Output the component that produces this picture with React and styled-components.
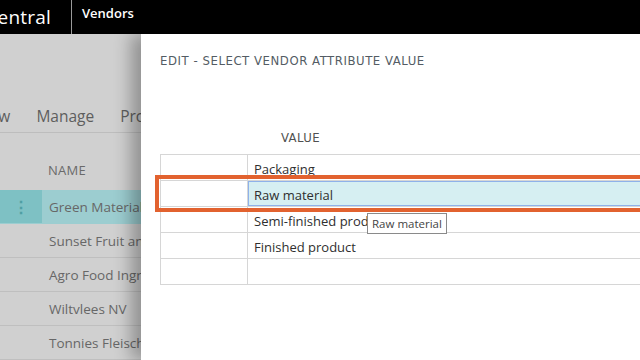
import styled, { createGlobalStyle } from "styled-components";

const GlobalStyle = createGlobalStyle`
  html, body {
    margin: 0;
    padding: 0;
    width: 640px;
    height: 360px;
    overflow: hidden;
    background: #000;
  }
  * {
    box-sizing: border-box;
  }
`;

const Screen = styled.div`
  display: flex;
  flex-direction: column;
  width: 640px;
  height: 360px;
  font-family: "Open Sans", "Noto Sans", sans-serif;
`;

const TopBar = styled.header`
  display: flex;
  align-items: stretch;
  height: 34px;
  background: #000;
  color: #fff;
  flex-shrink: 0;
`;

const Brand = styled.div`
  width: 72px;
  display: flex;
  justify-content: flex-end;
  align-items: center;
  overflow: hidden;
  white-space: nowrap;
  font-size: 19px;
  padding-right: 20px;
  border-right: 1px solid #9a9a9a;
  letter-spacing: 0.2px;
`;

const PageName = styled.div`
  padding: 4px 0 0 10px;
  font-size: 13px;
  font-weight: 600;
`;

const Workspace = styled.div`
  flex: 1;
  display: flex;
  min-height: 0;
`;

const Behind = styled.section`
  width: 141px;
  flex-shrink: 0;
  background: #d0d0d0;
  overflow: hidden;
  display: flex;
  flex-direction: column;
  padding-top: 71px;
`;

const ActionBar = styled.nav`
  display: flex;
  gap: 26px;
  margin-left: -22px;
  height: 28px;
  width: 200px;
  border-bottom: 1px solid #bdbdbd;
  white-space: nowrap;
  font-size: 15.5px;
  line-height: 22px;
  color: #5e5e5e;
`;

const ListHeader = styled.div`
  padding: 28px 0 0 48px;
  height: 57px;
  font-size: 13px;
  color: #6a6a6a;
  letter-spacing: 0.3px;
`;

const ListRow = styled.div`
  display: flex;
  height: 34px;
  border-bottom: 1px solid ${(p) => (p.$selected ? "transparent" : "#bfbfbf")};
  background: ${(p) => (p.$selected ? "#9ccdd0" : "transparent")};
  white-space: nowrap;
  font-size: 13.5px;
  color: #676767;
`;

const RowHandle = styled.div`
  width: 42px;
  flex-shrink: 0;
  display: flex;
  align-items: center;
  justify-content: center;
  background: ${(p) => (p.$selected ? "#7ec1c4" : "transparent")};
  color: #4f9fa3;
  font-size: 16px;
  font-weight: 700;
`;

const RowName = styled.div`
  padding-left: 7px;
  display: flex;
  align-items: center;
`;

const Dialog = styled.section`
  position: relative;
  flex: 1;
  background: #fff;
  overflow: hidden;
  padding: 19px 0 0 19px;
  box-shadow: -10px 0 16px rgba(0, 0, 0, 0.3);
`;

const Title = styled.h2`
  margin: 0;
  font-family: "DejaVu Sans Condensed", "DejaVu Sans", sans-serif;
  font-size: 13px;
  font-weight: 400;
  letter-spacing: 0.55px;
  color: #535c64;
  line-height: 16px;
`;

const Table = styled.div`
  position: relative;
  margin-top: 59px;
  width: 540px;
`;

const HeadRow = styled.div`
  display: grid;
  grid-template-columns: 87px 1fr;
  height: 26px;
  font-size: 13px;
  color: #505050;
  letter-spacing: 0.4px;
`;

const HeadCell = styled.div`
  padding-left: 34px;
  font-family: "DejaVu Sans Condensed", "DejaVu Sans", sans-serif;
  line-height: 14px;
  padding-top: 3px;
`;

const Body = styled.div`
  border-top: 1px solid #d6d6d6;
  border-left: 1px solid #d6d6d6;
`;

const Row = styled.div`
  display: grid;
  grid-template-columns: 86px 1fr;
  height: 26px;
  border-bottom: 1px solid #d6d6d6;
`;

const Cell = styled.div`
  display: flex;
  align-items: center;
  padding-left: 6px;
  padding-top: 2px;
  font-size: 13px;
  color: #2f2f2f;
  white-space: nowrap;
  border-left: ${(p) => (p.$first ? "none" : "1px solid #d6d6d6")};
  background: ${(p) => (p.$active ? "#d6eff2" : "transparent")};
  box-shadow: ${(p) => (p.$active ? "inset 0 1px 0 #8fb2ea, inset 0 -1px 0 #8fb2ea, inset 1px 0 0 #8fb2ea" : "none")};
`;

const Highlight = styled.div`
  position: absolute;
  left: -5px;
  top: 47px;
  width: 520px;
  height: 37px;
  border: 4px solid #e2622f;
  pointer-events: none;
`;

const Tooltip = styled.div`
  position: absolute;
  left: 207px;
  top: 85px;
  height: 21px;
  padding: 0 4px;
  display: flex;
  align-items: center;
  background: #fff;
  border: 1px solid #8a8a8a;
  font-size: 11.5px;
  color: #444;
  white-space: nowrap;
`;

const vendors = [
  "Green Materials",
  "Sunset Fruit and Veg",
  "Agro Food Ingredients",
  "Wiltvlees NV",
  "Tonnies Fleisch",
];

const values = ["Packaging", "Raw material", "Semi-finished product", "Finished product", ""];

export default function App() {
  return (
    <>
      <GlobalStyle />
      <Screen>
        <TopBar>
          <Brand>Business Central</Brand>
          <PageName>Vendors</PageName>
        </TopBar>
        <Workspace>
          <Behind>
            <ActionBar>
              <span>New</span>
              <span>Manage</span>
              <span>Process</span>
            </ActionBar>
            <ListHeader>NAME</ListHeader>
            {vendors.map((name, i) => (
              <ListRow key={name} $selected={i === 0}>
                <RowHandle $selected={i === 0}>{i === 0 ? "⋮" : ""}</RowHandle>
                <RowName>{name}</RowName>
              </ListRow>
            ))}
          </Behind>
          <Dialog>
            <Title>EDIT - SELECT VENDOR ATTRIBUTE VALUE</Title>
            <Table>
              <HeadRow>
                <div />
                <HeadCell>VALUE</HeadCell>
              </HeadRow>
              <Body>
                {values.map((v, i) => (
                  <Row key={i}>
                    <Cell $first />
                    <Cell $active={i === 1}>{v}</Cell>
                  </Row>
                ))}
              </Body>
              <Highlight />
              <Tooltip>Raw material</Tooltip>
            </Table>
          </Dialog>
        </Workspace>
      </Screen>
    </>
  );
}
